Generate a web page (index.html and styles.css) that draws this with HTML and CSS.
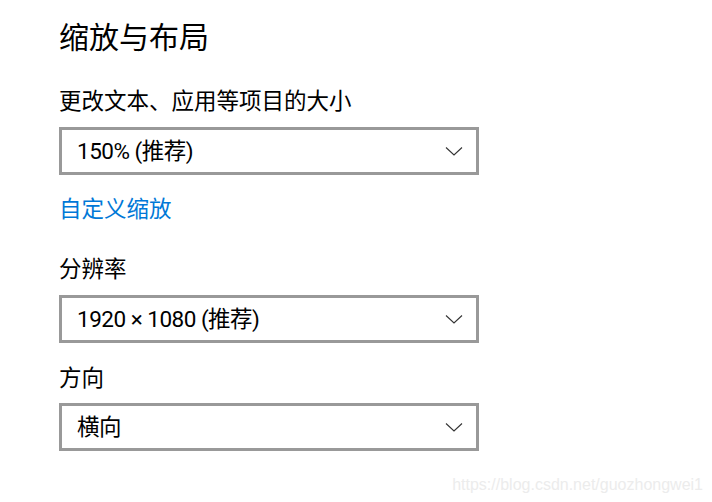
FILE: index.html
```html
<!DOCTYPE html>
<html lang="zh-CN">
<head>
<meta charset="utf-8">
<title>缩放与布局</title>
<link rel="stylesheet" href="styles.css">
</head>
<body>
<main class="page">
  <h1 class="title">缩放与布局</h1>

  <div class="label label-first">更改文本、应用等项目的大小</div>
  <div class="combo">
    <span class="combo-text">150% (推荐)</span>
    <svg class="chev" width="18" height="10" viewBox="0 0 18 10"><path d="M1 1.5 L9 9 L17 1.5" fill="none" stroke="#333" stroke-width="1.1"/></svg>
  </div>

  <a class="link" href="#">自定义缩放</a>

  <div class="label label-after-link">分辨率</div>
  <div class="combo">
    <span class="combo-text">1920 × 1080 (推荐)</span>
    <svg class="chev" width="18" height="10" viewBox="0 0 18 10"><path d="M1 1.5 L9 9 L17 1.5" fill="none" stroke="#333" stroke-width="1.1"/></svg>
  </div>

  <div class="label label-after-combo">方向</div>
  <div class="combo">
    <span class="combo-text">横向</span>
    <svg class="chev" width="18" height="10" viewBox="0 0 18 10"><path d="M1 1.5 L9 9 L17 1.5" fill="none" stroke="#333" stroke-width="1.1"/></svg>
  </div>

  <div class="watermark">https://blog.csdn.net/guozhongwei1</div>
</main>
</body>
</html>
```

FILE: styles.css
```css
html, body {
  margin: 0;
  padding: 0;
  background: #ffffff;
}

body {
  width: 712px;
  height: 502px;
  overflow: hidden;
  font-family: "Roboto", "Noto Sans CJK SC", sans-serif;
  color: #000;
}

.page {
  position: relative;
  height: 502px;
  display: flex;
  flex-direction: column;
  align-items: flex-start;
  padding: 15px 0 0 59px;
  box-sizing: border-box;
}

.title {
  margin: 0;
  font-weight: 400;
  font-size: 30px;
  line-height: 40px;
  font-family: "Noto Sans CJK SC", sans-serif;
}

.label {
  font-size: 22.5px;
  line-height: 32px;
  font-family: "Noto Sans CJK SC", sans-serif;
}

.label-first {
  margin-top: 28px;
}

.label-after-link {
  margin-top: 28px;
}

.label-after-combo {
  margin-top: 17px;
}

.combo {
  margin-top: 11px;
  width: 420px;
  height: 48px;
  box-sizing: border-box;
  border: 3px solid #999999;
  display: flex;
  align-items: center;
  justify-content: space-between;
  padding: 0 13px 0 15px;
  background: #fff;
}

.label-first + .combo {
  margin-top: 12px;
}

.label-after-link + .combo {
  margin-top: 12px;
}

.combo-text {
  font-size: 22.5px;
  line-height: 32px;
  letter-spacing: -0.5px;
  font-family: "Roboto", "Noto Sans CJK SC", sans-serif;
}

.chev {
  display: block;
  flex: none;
}

.link {
  margin-top: 16px;
  font-size: 22.5px;
  line-height: 32px;
  color: #0078d7;
  text-decoration: none;
  font-family: "Noto Sans CJK SC", sans-serif;
}

.watermark {
  position: absolute;
  right: 9px;
  bottom: 8px;
  font-family: "Liberation Sans", Arial, sans-serif;
  font-size: 16px;
  color: #ececec;
}
```
